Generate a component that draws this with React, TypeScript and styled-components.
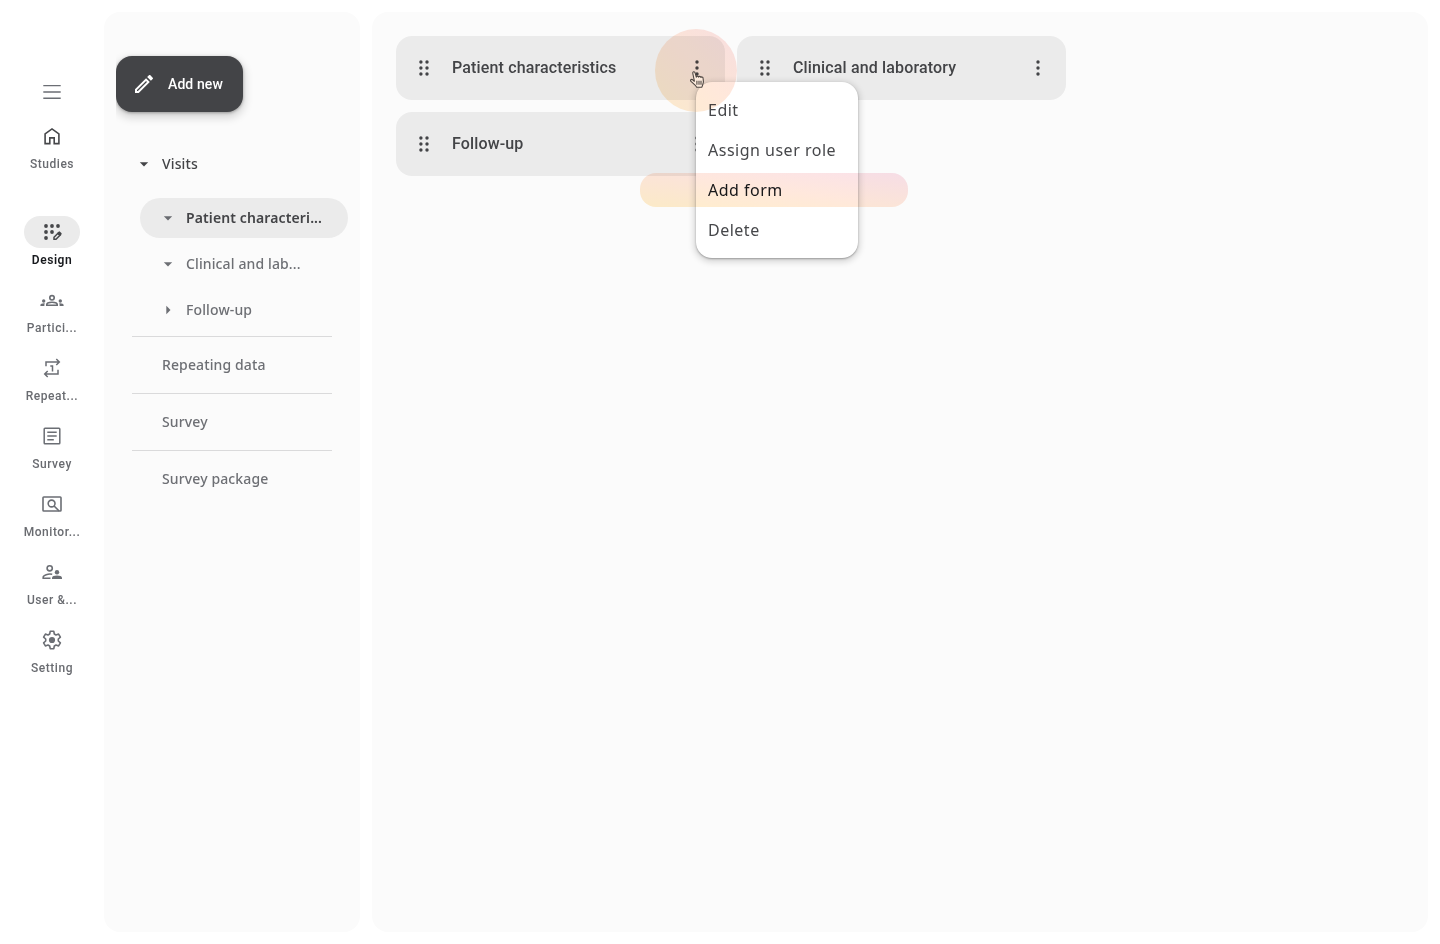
import React from 'react';
import styled, { createGlobalStyle } from 'styled-components';
import { MdArrowDropDown, MdArrowRight, MdOutlineEdit } from 'react-icons/md';

const GlobalStyle = createGlobalStyle`
  * { box-sizing: border-box; }
  body { margin: 0; background: #fff; }
  button { border: 0; background: none; padding: 0; font: inherit; color: inherit; }
`;

const roboto = `Roboto, 'Liberation Sans', sans-serif`;
const noto = `'Noto Sans', 'Open Sans', sans-serif`;

const Page = styled.div`
  position: relative;
  display: flex;
  width: 1440px;
  height: 944px;
  padding: 12px 12px 12px 0;
  overflow: hidden;
`;

const Rail = styled.nav`
  display: flex;
  flex-direction: column;
  align-items: center;
  gap: 16px;
  width: 104px;
  padding-top: 68px;
`;

const MenuToggle = styled.button`
  display: flex;
  height: 24px;
`;

const RailItem = styled.a<{ $active?: boolean; $spaced?: boolean }>`
  display: flex;
  flex-direction: column;
  align-items: center;
  gap: 4px;
  width: 80px;
  margin-bottom: ${p => (p.$spaced ? 28 : 0)}px;
  color: ${p => (p.$active ? '#17191d' : '#696b70')};
`;

const RailIcon = styled.span<{ $active?: boolean; $dark?: boolean }>`
  display: flex;
  align-items: center;
  justify-content: center;
  width: 56px;
  height: 32px;
  border-radius: 16px;
  background: ${p => (p.$active ? '#ebebeb' : 'transparent')};
  color: ${p => (p.$active || p.$dark ? '#46474a' : '#6b6e74')};
`;

const RailLabel = styled.span<{ $active?: boolean }>`
  font: ${p => (p.$active ? 600 : 500)} 12px/16px ${roboto};
  letter-spacing: 0.54px;
  white-space: nowrap;
`;

const Sidebar = styled.aside`
  width: 256px;
  padding: 44px 12px 0;
  border-radius: 16px;
  background: #fbfbfb;
`;

const AddButton = styled.button`
  display: flex;
  align-items: center;
  gap: 12px;
  width: 127px;
  height: 56px;
  padding-left: 16px;
  border-radius: 16px;
  background: #434447;
  color: #fff;
  font: 500 14px/20px ${roboto};
  letter-spacing: 0.1px;
  box-shadow: 0 1px 3px rgba(0, 0, 0, 0.3), 0 4px 8px 2px rgba(0, 0, 0, 0.15);
  clip-path: inset(-8px -16px -16px 0);
`;

const Tree = styled.div`
  display: flex;
  flex-direction: column;
  padding-top: 32px;
`;

const TreeRow = styled.div<{ $level: number; $active?: boolean; $tone?: string }>`
  display: flex;
  align-items: center;
  gap: 6px;
  height: 40px;
  margin-left: ${p => (p.$level ? 24 : 0)}px;
  margin-bottom: ${p => (p.$level ? 6 : 14)}px;
  padding-left: 16px;
  border-radius: 20px;
  background: ${p => (p.$active ? '#ebebeb' : 'transparent')};
  color: ${p => p.$tone || '#6d6f74'};
  font: ${p => (p.$active ? 600 : 500)} 14px/20px ${noto};
  letter-spacing: 0.12px;
  white-space: nowrap;
`;

const Arrow = styled.span`
  display: flex;
  width: 24px;
  height: 24px;
  justify-content: center;
  align-items: center;
`;

const Section = styled.div`
  height: 57px;
  margin: 0 16px;
  padding-left: 30px;
  border-top: 1px solid #dadadb;
  color: #6d6f74;
  font: 500 14px/56px ${noto};
  letter-spacing: 0.12px;
`;

const Workspace = styled.main`
  flex: 1;
  margin-left: 12px;
  padding: 24px;
  border-radius: 16px;
  background: #fbfbfb;
`;

const CardGrid = styled.div`
  display: grid;
  grid-template-columns: 329px 329px;
  grid-auto-rows: 64px;
  gap: 12px;
`;

const Card = styled.div`
  display: flex;
  align-items: center;
  padding: 0 16px;
  border-radius: 16px;
  background: #ebebeb;
  color: #434447;
`;

const CardTitle = styled.span`
  flex: 1;
  margin-left: 16px;
  font: 500 16px/24px ${roboto};
  letter-spacing: 0.15px;
`;

const Menu = styled.div`
  position: absolute;
  left: 696px;
  top: 82px;
  width: 162px;
  height: 176px;
  padding: 8px 12px;
  border-radius: 16px;
  background: #fff;
  box-shadow: 0 1px 2px rgba(0, 0, 0, 0.3), 0 2px 6px 2px rgba(0, 0, 0, 0.15);
`;

const MenuItem = styled.div<{ $current?: boolean }>`
  color: ${p => (p.$current ? '#17191d' : '#46474a')};
  font: 400 16px/40px ${noto};
  letter-spacing: 0.5px;
  white-space: nowrap;
`;

const Glow = styled.div`
  position: absolute;
  pointer-events: none;
  mix-blend-mode: multiply;
`;

const TapGlow = styled(Glow)`
  left: 655px;
  top: 29px;
  width: 82px;
  height: 83px;
  border-radius: 50%;
  background: linear-gradient(to top right, #ffeecf 0%, #ffe8da 50%, #fce2e4 100%);
`;

const RowGlow = styled(Glow)`
  left: 640px;
  top: 173px;
  width: 268px;
  height: 34px;
  border-radius: 16px;
  background: linear-gradient(to top right, #ffeecb 0%, #ffe8dc 50%, #fae1ea 100%);
`;

const Pointer = styled.svg`
  position: absolute;
  left: 689px;
  top: 70px;
`;

const Dots = ({ columns }: { columns: number[] }) => (
  <svg width="24" height="24" viewBox="0 0 24 24" fill="currentColor">
    {columns.map(x => [6, 12, 18].map(y => <circle key={`${x}-${y}`} cx={x} cy={y} r={1.7} />))}
  </svg>
);

const Glyph = ({ children, weight = 1.5 }: { children: React.ReactNode; weight?: number }) => (
  <svg width="24" height="24" viewBox="0 0 24 24" fill="none" stroke="currentColor" strokeWidth={weight}>
    {children}
  </svg>
);

const HomeIcon = () => (
  <Glyph weight={1.6}>
    <path d="M5.100 19.600V9.900L12 4.900l6.900 5v9.700h-4.700v-5.700H9.800v5.700z" />
  </Glyph>
);

const DesignIcon = () => (
  <Glyph weight={1.5}>
    <g fill="currentColor" stroke="none">
      <circle cx="6" cy="6" r="1.9" />
      <circle cx="12" cy="6" r="1.9" />
      <circle cx="18" cy="6" r="1.9" />
      <circle cx="6" cy="12" r="1.9" />
      <circle cx="12" cy="12" r="1.9" />
      <circle cx="6" cy="18" r="1.9" />
      <path d="M16.900 13.400l1.700-1.700q.7-.7 1.400 0l1.400 1.400q.7.7 0 1.400l-1.700 1.700z" />
    </g>
    <path d="M14 19.200v-2l4.200-4.200 2 2-4.200 4.200z" />
  </Glyph>
);

const GroupsIcon = () => (
  <Glyph weight={1.65}>
    <circle cx="12" cy="9.800" r="2.200" />
    <path d="M6.800 17.200v-.6c0-1.500 2.300-2.400 5.200-2.400s5.200.9 5.200 2.400v.6z" />
    <g fill="currentColor" stroke="none">
      <circle cx="3.700" cy="13" r="1.700" />
      <circle cx="20.300" cy="13" r="1.700" />
      <path d="M.4 18v-.9c0-1.200 1.500-1.900 3.600-1.900h.9c-.4.600-.5 1-.5 1.700V18z" />
      <path d="M23.600 18v-.9c0-1.200-1.500-1.900-3.600-1.900h-.9c.4.600.5 1 .5 1.700V18z" />
    </g>
  </Glyph>
);

const RepeatIcon = () => (
  <Glyph>
    <path d="M6 10.300V6h13M16.300 3l3 3-3 3M18 13.700V18H5M7.700 15l-3 3 3 3M10.300 10h2.200v5.400" />
  </Glyph>
);

const SurveyIcon = () => (
  <Glyph>
    <rect x="4.200" y="4.200" width="15.600" height="15.600" rx=".8" />
    <path d="M7.300 8.200h9.400M7.300 12h9.400M7.300 15.800h6.500" />
  </Glyph>
);

const MonitorIcon = () => (
  <Glyph weight={1.6}>
    <rect x="3" y="5" width="18" height="14" rx=".8" />
    <circle cx="11.600" cy="11.500" r="3.400" />
    <path d="M14.100 14l5 5" />
  </Glyph>
);

const UserIcon = () => (
  <Glyph weight={1.6}>
    <circle cx="9.700" cy="8.300" r="2.600" />
    <path d="M12.200 14.300c-4-.8-9 .8-9 3v.9h7.300" />
    <g fill="currentColor" stroke="none">
      <circle cx="17" cy="12.300" r="2.200" />
      <path d="M12 19v-1.300c0-1.500 2.300-2.200 5-2.200s5 .7 5 2.200V19z" />
    </g>
  </Glyph>
);

const GearIcon = () => (
  <Glyph weight={1.6}>
    <path
      strokeLinejoin="round"
      d="M10.200 3.300h3.600l.5 2.700 1.700 1 2.600-.9 1.800 3.100-2.100 1.800v2l2.100 1.800-1.800 3.100-2.600-.9-1.700 1-.5 2.700h-3.600l-.5-2.700-1.700-1-2.600.9-1.800-3.100L5.700 13v-2L3.600 9.200l1.800-3.100 2.600.9 1.700-1z"
    />
    <circle cx="12" cy="12" r="3.100" fill="currentColor" stroke="none" />
  </Glyph>
);

const railItems = [
  { label: 'Studies', icon: <HomeIcon />, dark: true, spaced: true },
  { label: 'Design', icon: <DesignIcon />, active: true },
  { label: 'Partici...', icon: <GroupsIcon /> },
  { label: 'Repeat...', icon: <RepeatIcon /> },
  { label: 'Survey', icon: <SurveyIcon /> },
  { label: 'Monitor...', icon: <MonitorIcon /> },
  { label: 'User &...', icon: <UserIcon /> },
  { label: 'Setting', icon: <GearIcon /> },
];

export default function App() {
  return (
    <>
      <GlobalStyle />
      <Page>
        <Rail>
          <MenuToggle>
            <svg width="24" height="24" viewBox="0 0 24 24" stroke="#6b6e74" strokeWidth="1.4">
              <path d="M3.300 5.600h17.400M3.300 12h17.400M3.300 18.300h17.400" />
            </svg>
          </MenuToggle>
          {railItems.map(item => (
            <RailItem key={item.label} $active={item.active} $spaced={item.spaced}>
              <RailIcon $active={item.active} $dark={item.dark}>{item.icon}</RailIcon>
              <RailLabel $active={item.active}>{item.label}</RailLabel>
            </RailItem>
          ))}
        </Rail>
        <Sidebar>
          <AddButton>
            <MdOutlineEdit size={24} />
            Add new
          </AddButton>
          <Tree>
            <TreeRow $level={0} $tone="#434447">
              <Arrow><MdArrowDropDown size={20} /></Arrow>Visits
            </TreeRow>
            <TreeRow $level={1} $active $tone="#434447">
              <Arrow><MdArrowDropDown size={20} color="#696b70" /></Arrow>Patient characteri...
            </TreeRow>
            <TreeRow $level={1}>
              <Arrow><MdArrowDropDown size={20} /></Arrow>Clinical and lab...
            </TreeRow>
            <TreeRow $level={1}>
              <Arrow><MdArrowRight size={20} /></Arrow>Follow-up
            </TreeRow>
            <Section>Repeating data</Section>
            <Section>Survey</Section>
            <Section>Survey package</Section>
          </Tree>
        </Sidebar>
        <Workspace>
          <CardGrid>
            {['Patient characteristics', 'Clinical and laboratory', 'Follow-up'].map(title => (
              <Card key={title}>
                <Dots columns={[8.9, 15]} />
                <CardTitle>{title}</CardTitle>
                <Dots columns={[12]} />
              </Card>
            ))}
          </CardGrid>
        </Workspace>
        <Menu>
          <MenuItem>Edit</MenuItem>
          <MenuItem>Assign user role</MenuItem>
          <MenuItem $current>Add form</MenuItem>
          <MenuItem>Delete</MenuItem>
        </Menu>
        <TapGlow />
        <RowGlow />
        <Pointer width="17" height="19" viewBox="0 0 17 19" fill="#fdebdd" stroke="#4d4540" strokeWidth="1.1" strokeLinejoin="round">
          <path d="M5.500 11.500 3.800 3.500C3.400 1.500 5.600 1 6.100 2.900l1.200 4.300c.1-1.500 2-1.400 2.300 0 .3-1.200 2-1 2.300.3.500-1 2-.7 2.200.7.600 2.500.3 5.300-.6 7.200L12.900 17.200H7.700C6.500 15 4 13.200 2 11.400.8 10.100 2.300 8.800 3.700 9.800L5.500 11.500" />
          <path d="M7.900 10.700v4M10 10.700v4M12 10.700v4" />
        </Pointer>
      </Page>
    </>
  );
}
